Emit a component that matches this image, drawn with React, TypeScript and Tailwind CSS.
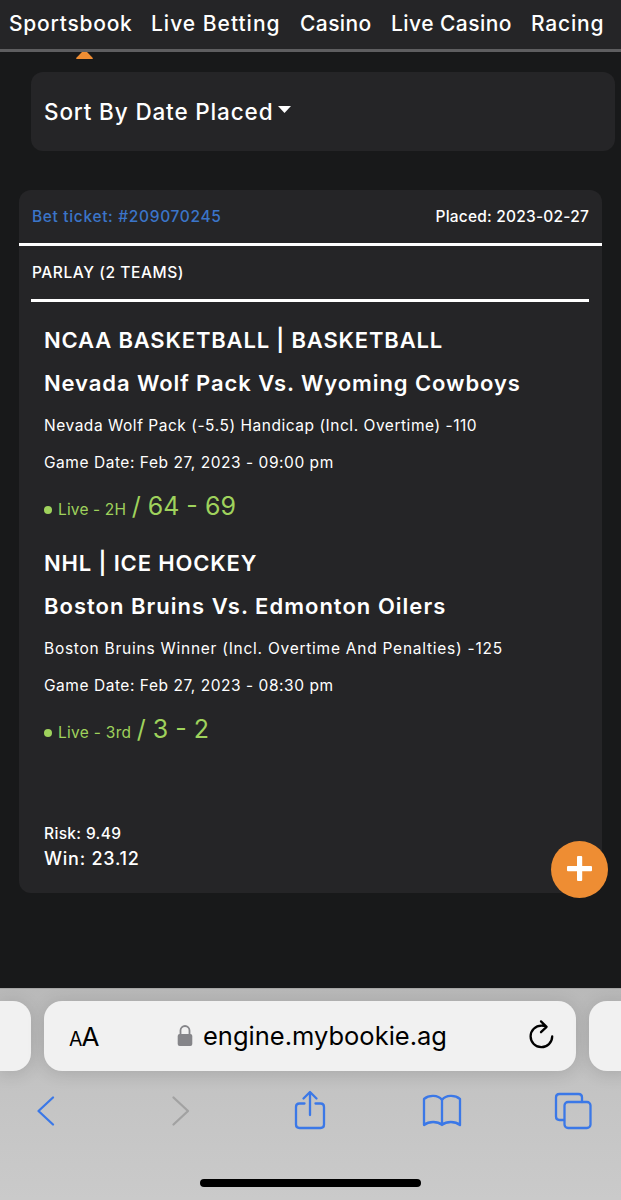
import type { ReactNode } from 'react';

interface Leg {
  league: string;
  leagueTracking: string;
  matchup: string;
  matchupTracking: string;
  pick: string;
  pickTracking: string;
  date: string;
  period: string;
  periodTracking: string;
  score: string;
}

const NAV: { label: string; className: string }[] = [
  { label: 'Sportsbook', className: 'w-[142px] tracking-[0.75px]' },
  { label: 'Live Betting', className: 'w-[149px] tracking-[1px]' },
  { label: 'Casino', className: 'w-[91px] tracking-[0.4px]' },
  { label: 'Live Casino', className: 'w-[140px] tracking-[0.45px]' },
  { label: 'Racing', className: 'tracking-[0.8px]' },
];

const LEGS: Leg[] = [
  {
    league: 'NCAA BASKETBALL | BASKETBALL',
    leagueTracking: 'tracking-[0.83px]',
    matchup: 'Nevada Wolf Pack Vs. Wyoming Cowboys',
    matchupTracking: 'tracking-[0.91px]',
    pick: 'Nevada Wolf Pack (-5.5) Handicap (Incl. Overtime) -110',
    pickTracking: 'tracking-[0.53px]',
    date: 'Game Date: Feb 27, 2023 - 09:00 pm',
    period: 'Live - 2H',
    periodTracking: 'tracking-[0.15px]',
    score: '/ 64 - 69',
  },
  {
    league: 'NHL | ICE HOCKEY',
    leagueTracking: 'tracking-[0.85px]',
    matchup: 'Boston Bruins Vs. Edmonton Oilers',
    matchupTracking: 'tracking-[1.02px]',
    pick: 'Boston Bruins Winner (Incl. Overtime And Penalties) -125',
    pickTracking: 'tracking-[0.75px]',
    date: 'Game Date: Feb 27, 2023 - 08:30 pm',
    period: 'Live - 3rd',
    periodTracking: 'tracking-[0.28px]',
    score: '/ 3 - 2',
  },
];

function TopNav() {
  return (
    <header className="relative h-[52px] border-b-[3px] border-[#5e5e60] bg-[#252527]">
      <nav className="flex pl-[9px] text-[21px] leading-[47px] font-medium">
        {NAV.map((item) => (
          <span key={item.label} className={`shrink-0 ${item.className}`}>{item.label}</span>
        ))}
      </nav>
      <svg className="absolute top-[52px] left-[75px]" width="19" height="8" viewBox="0 0 19 8">
        <path d="M7 0h5l5.6 5.7q.9 1.3-.5 1.3H1.9q-1.4 0-.5-1.3z" fill="#ee8d33" />
      </svg>
    </header>
  );
}

function LegBlock({ leg }: { leg: Leg }) {
  return (
    <div className="h-[223px] pl-[25px]">
      <div className={`text-[22px] leading-[44px] font-semibold ${leg.leagueTracking}`}>{leg.league}</div>
      <div className={`text-[22px] leading-[42px] font-semibold ${leg.matchupTracking}`}>{leg.matchup}</div>
      <div className={`pt-px text-[15.5px] leading-[42px] ${leg.pickTracking}`}>{leg.pick}</div>
      <div className="text-[15.5px] leading-[31px] tracking-[0.54px]">{leg.date}</div>
      <div className="-mt-px flex items-baseline text-[#9fd25c]">
        <span className="mr-[6px] size-2 -translate-y-[1px] rounded-full bg-[#9fd25c]" />
        <span className={`text-[15.5px] ${leg.periodTracking}`}>{leg.period}</span>
        <span className="ml-[5.5px] text-[25px] leading-[58px]">{leg.score}</span>
      </div>
    </div>
  );
}

function Ticket() {
  return (
    <section className="mt-[39px] ml-[19px] h-[703px] w-[583px] rounded-xl bg-[#252527]">
      <div className="flex h-[55.5px] justify-between border-b-[3px] border-white px-[13px] text-[15.5px] leading-[53px] font-medium">
        <span className="tracking-[0.66px] text-[#3b75c9]">Bet ticket: #209070245</span>
        <span className="tracking-[0.2px]">Placed: 2023-02-27</span>
      </div>
      <div className="mr-[13px] ml-3 h-14 border-b-[3px] border-white pl-px text-[15.5px] leading-[53px] font-medium tracking-[0.56px]">
        PARLAY (2 TEAMS)
      </div>
      <div className="pt-4">
        {LEGS.map((leg) => (
          <LegBlock key={leg.league} leg={leg} />
        ))}
      </div>
      <div className="mt-[57px] pl-[25px] font-medium">
        <div className="text-[15.5px] leading-[25px] tracking-[0.35px]">Risk: 9.49</div>
        <div className="text-[18px] leading-[25px] tracking-[0.75px]">Win: 23.12</div>
      </div>
    </section>
  );
}

function Icon({ className = '', w, h, children }: { className?: string; w: number; h: number; children: ReactNode }) {
  return (
    <svg
      className={`shrink-0 ${className}`}
      width={w}
      height={h}
      viewBox={`0 0 ${w} ${h}`}
      fill="none"
      stroke="currentColor"
      strokeWidth="2.3"
      strokeLinecap="round"
      strokeLinejoin="round"
    >
      {children}
    </svg>
  );
}

function BrowserBar() {
  return (
    <footer className="h-[212px] overflow-hidden border-t border-[#a5a5a5] bg-linear-to-b from-[#b9b9b9] via-[#c4c4c4] to-[#cacaca] pt-3 text-black">
      <div className="flex h-[70px] gap-[13px]">
        <div className="w-[31px] shrink-0 rounded-r-[18px] bg-[#f1f1f1] shadow-[0_2px_18px_rgba(0,0,0,0.14)]" />
        <div className="flex w-[532px] shrink-0 items-center rounded-[18px] bg-[#f1f1f1] pl-[25px] shadow-[0_2px_18px_rgba(0,0,0,0.14)]">
          <div className="flex w-[108px] items-baseline">
            <span className="text-[19.5px]">A</span>
            <span className="-ml-px text-[26px]">A</span>
          </div>
          <svg className="shrink-0" width="16" height="24" viewBox="0 0 16 24">
            <path d="M3.5 11V6.5a4.5 4.5 0 0 1 9 0V11" fill="none" stroke="#858589" strokeWidth="1.8" />
            <rect x="0.7" y="10" width="14.6" height="12" rx="2" fill="#858589" />
          </svg>
          <span className="ml-[10px] w-[323px] text-[25.5px]">engine.mybookie.ag</span>
          <Icon w={30} h={34}>
            <path d="M26.200 17.500a10.800 10.800 0 1 1-10.800-10.900c1.900 0 3.400.3 4.900 1M15 2.400l5.600 5.400-5.600 5.400" />
          </Icon>
        </div>
        <div className="w-[40px] shrink-0 rounded-l-[18px] bg-[#f1f1f1] shadow-[0_2px_18px_rgba(0,0,0,0.14)]" />
      </div>
      <div className="flex h-[79px] items-center text-[#3b78e7]">
        <Icon className="ml-[36px]" w={20} h={32}>
          <path d="M17 2.5 2.5 16 17 29.5" />
        </Icon>
        <Icon className="ml-[115px] text-[#a2a2a2]" w={20} h={32}>
          <path d="M2.5 2.5 17 16 2.5 29.5" />
        </Icon>
        <Icon className="ml-[102px]" w={34} h={42}>
          <path d="M11.5 13.5H6.500q-3.500 0-3.500 3.500v17.500Q3 38 6.500 38h21q3.500 0 3.500-3.500V17q0-3.500-3.500-3.500h-5" />
          <path d="M17 25V2.500M10.500 8.500 17 2l6.500 6.500" />
        </Icon>
        <Icon className="ml-[95px]" w={40} h={34}>
          <path d="M20 6C16 .8 7 .8 2 5v26c5-4 13.5-4 18 0 4.500-4 13-4 18 0V5C33 .8 24 .8 20 6zV31" />
        </Icon>
        <Icon className="ml-[92px]" w={38} h={38}>
          <path d="M10 28H5.5Q2 28 2 24.5V5.5Q2 2 5.5 2h19Q28 2 28 5.5V10" />
          <rect x="10.5" y="10" width="26" height="26" rx="3.5" />
        </Icon>
      </div>
      <div className="mx-auto mt-[29px] h-2 w-[221px] rounded-full bg-black" />
    </footer>
  );
}

export default function App() {
  return (
    <div className="relative h-[1200px] w-[621px] overflow-hidden bg-[#18191a] font-['Inter','Liberation_Sans',sans-serif] whitespace-nowrap text-white">
      <TopNav />
      <main className="h-[936px]">
        <div className="h-5" />
        <div className="ml-[31px] flex h-[79px] w-[584px] items-center rounded-xl bg-[#252527] pl-[13px] text-[22.5px] font-medium">
          <span className="w-[234px] tracking-[0.85px]">Sort By Date Placed</span>
          <svg className="-translate-y-0.5" width="13" height="7" viewBox="0 0 13 7">
            <path d="M0 0h13L6.5 7z" fill="#fff" />
          </svg>
        </div>
        <Ticket />
      </main>
      <button type="button" className="absolute top-[841px] left-[551px] flex size-[57px] items-center justify-center rounded-full bg-[#ee8d33] pb-[3px]">
        <svg width="25" height="25" viewBox="0 0 25 25">
          <rect x="10" width="5.2" height="25" rx="1" fill="#fff" />
          <rect y="10" width="25" height="5.2" rx="1" fill="#fff" />
        </svg>
      </button>
      <BrowserBar />
    </div>
  );
}
